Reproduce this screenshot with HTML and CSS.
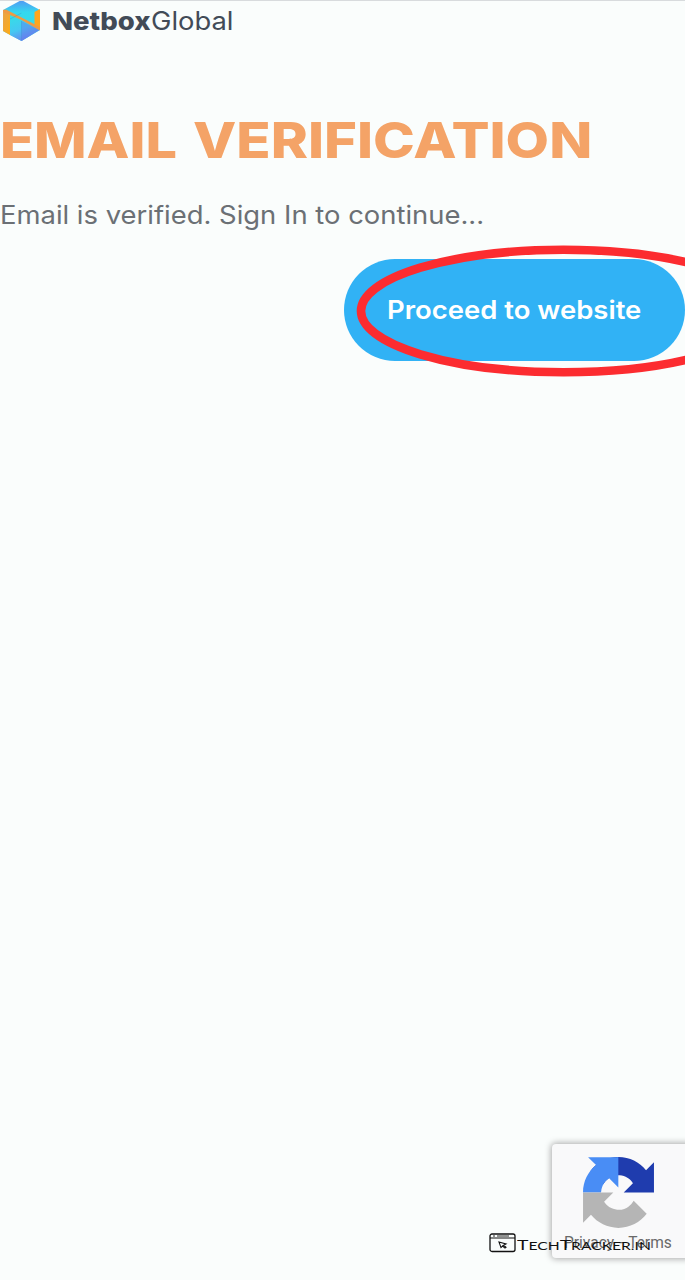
FILE: index.html
```
<!DOCTYPE html>
<html lang="en">
<head>
<meta charset="utf-8">
<title>Netbox Global</title>
<link rel="stylesheet" href="styles.css">
</head>
<body>
<header class="header">
  <svg class="logo" viewBox="0 0 44 42">
    <defs>
      <linearGradient id="top" x1="0" y1="0" x2="0" y2="1"><stop offset="0" stop-color="#5296f4"/><stop offset=".3" stop-color="#35d8ef"/><stop offset="1" stop-color="#37e0dc"/></linearGradient>
      <linearGradient id="low" x1="0" y1="0" x2=".4" y2="1"><stop offset="0" stop-color="#32e2e3"/><stop offset=".6" stop-color="#45c8f2"/><stop offset="1" stop-color="#6a84f0"/></linearGradient>
      <linearGradient id="gold" x1="0" y1="0" x2="1" y2="1"><stop offset="0" stop-color="#e6a24c"/><stop offset="1" stop-color="#ffac13"/></linearGradient>
    </defs>
    <path fill="url(#top)" d="M21.500 0 40 10v20L21.500 41 3 31V10z"/>
    <path fill="url(#low)" d="M10 14 21.500 20 39.500 30 21.500 41 10 35z"/>
    <path fill="#6573eb" d="m21.500 21 18 9L21.500 41z" opacity=".4"/>
    <path fill="url(#gold)" d="M3 10.500 10 14v21l-7-4z"/>
    <path fill="#ffa51c" d="m34.500 12 5.500-3V30l-5.500-3z"/>
    <path fill="#ef9a43" d="m3 10 3-.5L40 27v3.500L21.500 20 3 12z"/>
    <path d="M21.500 21v19M10 19l11.500-6" stroke="#398ed0" stroke-width=".6" opacity=".6" fill="none"/>
  </svg>
  <div class="brand"><span class="fit brand-bold">Netbox</span><span class="fit brand-light">Global</span></div>
</header>
<main>
  <h1 class="title"><span class="fit title-a">EMAIL</span> <span class="fit title-b">VERIFICATION</span></h1>
  <p class="message"><span class="fit message-text">Email is verified. Sign In to continue...</span></p>
  <div class="actions">
    <button class="proceed"><span class="fit proceed-text">Proceed to website</span></button>
    <svg class="highlight" viewBox="0 0 335 140"><ellipse cx="213.500" cy="71" rx="202.500" ry="61.200" fill="none" stroke="#fc2c30" stroke-width="8.600"/></svg>
  </div>
</main>
<aside class="captcha">
  <svg class="captcha-logo" viewBox="0 0 64 64">
    <path fill="#1f3cae" d="M64 31.955l-.033-1.370V4.687l-7.160 7.160C50.948 4.674 42.033.093 32.050.093c-10.400 0-19.622 4.960-25.458 12.640l11.736 11.860a15.550 15.550 0 0 1 4.754-5.334c2.050-1.600 4.952-2.906 8.968-2.906.485 0 .860.057 1.135.163 4.976.393 9.288 3.140 11.828 7.124l-8.307 8.307L64 31.953"/>
    <path fill="#498df5" d="M31.862.094l-1.370.033H4.594l7.160 7.160C4.580 13.147 0 22.060 0 32.046L16.260 32.046c0-.485.057-.860.163-1.135.393-4.976 3.140-9.288 7.124-11.828l8.307 8.307L31.860.095"/>
    <path fill="#b5b5b5" d="M.001 32.045l.033 1.370v25.898l7.160-7.160c5.860 7.173 14.774 11.754 24.760 11.754 10.400 0 19.622-4.960 25.458-12.640l-11.736-11.860a15.550 15.550 0 0 1-4.754 5.334c-2.050 1.600-4.952 2.906-8.968 2.906-.485 0-.860-.057-1.135-.163-4.976-.393-9.288-3.140-11.828-7.124l8.307-8.307c-10.522.040-22.400.066-27.295-.005"/>
  </svg>
  <div class="captcha-links"><span>Privacy</span><span>-</span><span>Terms</span></div>
</aside>
<div class="watermark">
  <svg class="watermark-icon" viewBox="0 0 28 20" fill="none" stroke="#111" stroke-width="1.300">
    <rect x="1" y="1" width="25" height="17.500" rx="2"/>
    <path d="M1 5h25" stroke-width="1"/>
    <path d="M4 3h2M8 3h12" stroke-width=".9"/>
    <path d="m10 9 7 2-2.500 1.300 2.500 2-1 .8-2.500-2-1.500 1.500z" stroke-width="1.100"/>
  </svg>
  <span class="fit watermark-text">T<span class="small">ECH</span>T<span class="small">RACKER.IN</span></span>
</div>
</body>
</html>
```
FILE: styles.css
```
* { box-sizing: border-box; }
body {
  margin: 0;
  position: relative;
  height: 1280px;
  overflow: hidden;
  background: #fafdfc;
  border-top: 1px solid #d8dbdd;
  font-family: Inter, "Open Sans", sans-serif;
}
.fit { display: inline-block; white-space: nowrap; transform-origin: left center; }
.header { display: flex; height: 41px; margin-top: -1px; }
.logo { width: 44px; height: 42px; flex: none; }
.brand { height: 41px; padding-left: 8px; display: flex; color: #424b57; font-size: 25px; line-height: 42px; }
.brand-bold { width: 99px; font-weight: 800; transform: scaleX(1.1); }
.brand-light { font-weight: 400; transform: scaleX(1.095); }
.title { display: flex; margin: 68px 0 0; height: 62px; color: #f4a367; font-size: 50px; line-height: 62px; font-weight: 800; }
.title-a { width: 193px; transform: scaleX(1.115); }
.title-b { transform: scaleX(1.126); }
.message { margin: 24px 0 0; height: 40px; color: #6b7075; font-size: 25.500px; line-height: 39px; }
.message-text { transform: scaleX(1.075); }
.actions { position: relative; display: flex; justify-content: flex-end; margin-top: 24px; }
.proceed {
  width: 341px; height: 102px; padding: 0 0 0 43px;
  border: 0; border-radius: 51px; background: #31b2f5;
  color: #fff; font: 600 25.500px/102px Inter, sans-serif; text-align: left;
}
.proceed-text { transform: scaleX(1.077); }
.highlight { position: absolute; right: 0; top: -19px; width: 335px; height: 140px; }
.captcha {
  position: absolute; left: 552px; top: 1143px; width: 140px; height: 114px;
  padding: 13px 0 0 12px;
  background: #f9f9fa; border-radius: 4px; box-shadow: 0 0 6px 1px #aaa;
}
.captcha-logo { display: block; width: 71px; height: 71px; margin-left: 19px; }
.captcha-links { display: flex; gap: 5px; margin-top: 4px; color: #696969; font: 16px/22px Roboto, sans-serif; transform: scaleX(.97); transform-origin: left; }
.watermark { position: absolute; left: 489px; top: 1232px; display: flex; height: 20px; color: #111; }
.watermark-icon { width: 28px; height: 20px; }
.watermark-text { font: 13px/25px Lato, sans-serif; transform: scaleX(1.49); }
.small { font-size: 10.500px; }
```
